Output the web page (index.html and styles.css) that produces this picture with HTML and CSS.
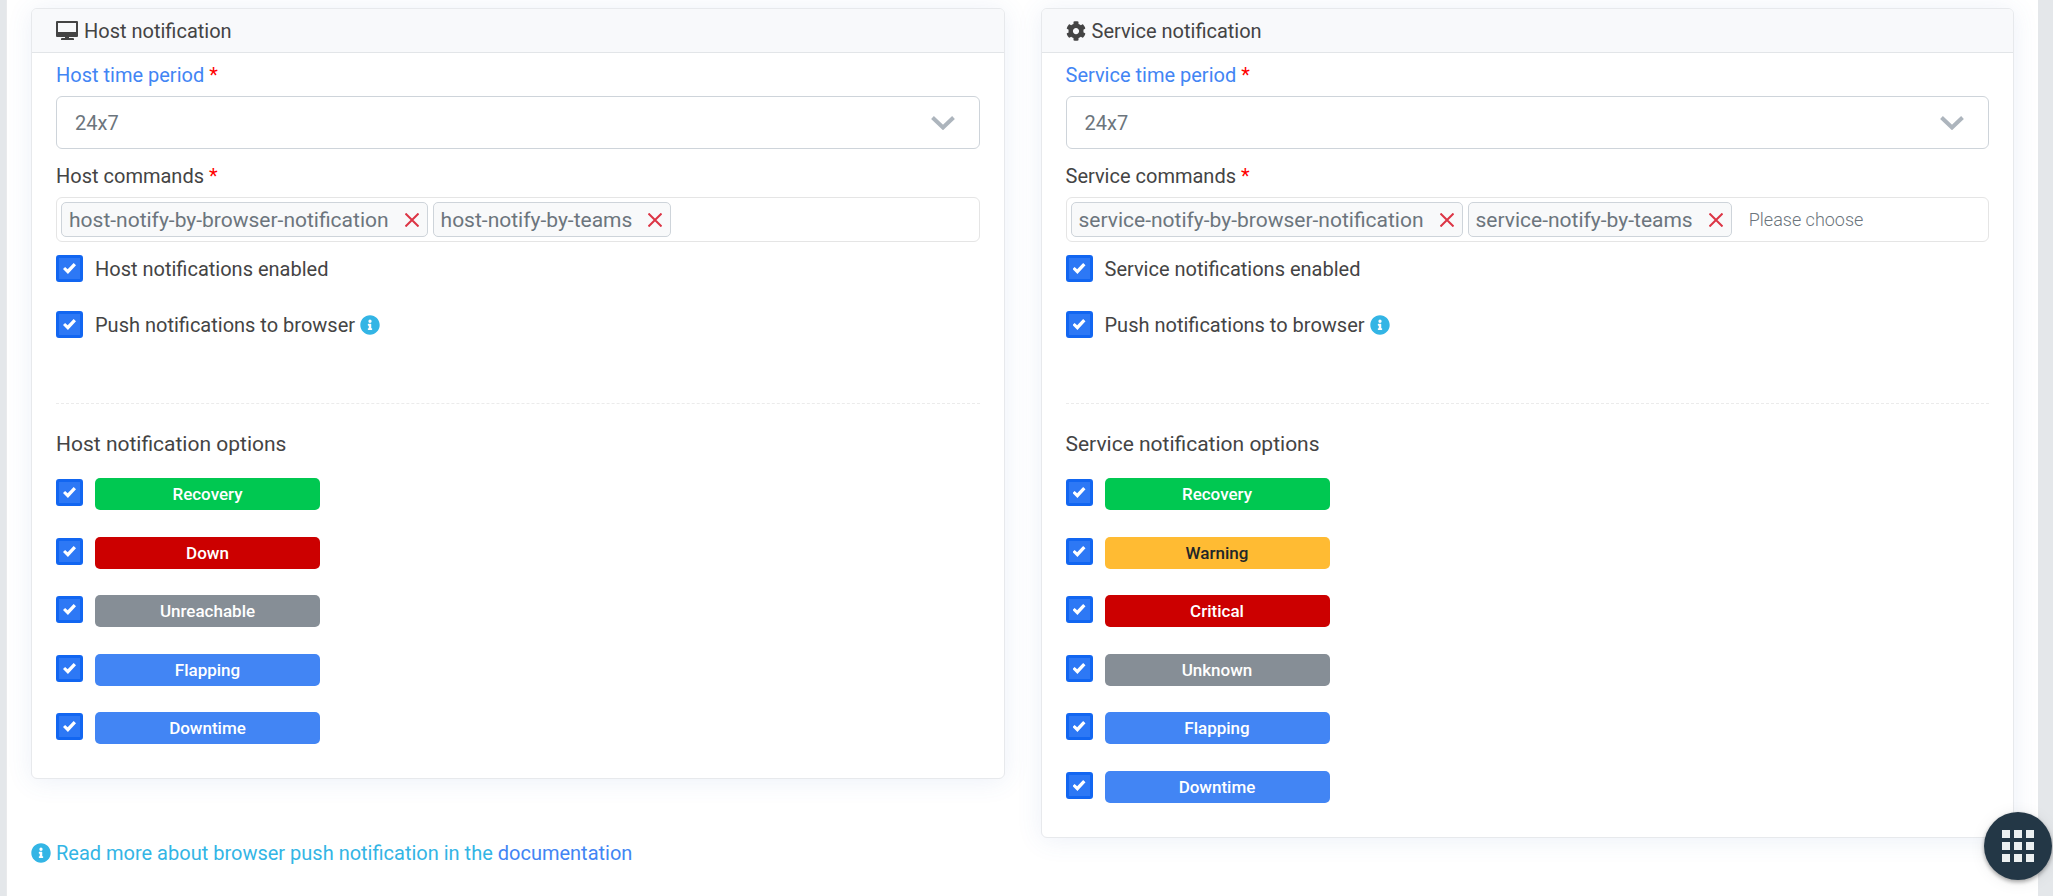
FILE: index.html
```html
<!DOCTYPE html>
<html lang="en">
<head>
<meta charset="utf-8">
<title>Notification settings</title>
<link rel="stylesheet" href="styles.css">
</head>
<body>
<svg class="sprite" aria-hidden="true">
  <symbol id="icon-info" viewBox="0 0 512 512"><path fill="currentColor" d="M256 8C119 8 8 119 8 256s111 248 248 248 248-111 248-248S393 8 256 8zm0 110a42 42 0 1 1 0 84 42 42 0 0 1 0-84zm56 254c0 7-5 12-12 12h-88c-7 0-12-5-12-12v-24c0-7 5-12 12-12h12v-64h-12c-7 0-12-5-12-12v-24c0-7 5-12 12-12h64c7 0 12 5 12 12v100h12c7 0 12 5 12 12v24z"/></symbol>
  <symbol id="icon-chevron" viewBox="0 0 24 14"><path fill="none" stroke="currentColor" stroke-width="4" d="M1.500 1.500 12 11.500 22.500 1.500"/></symbol>
  <symbol id="icon-close" viewBox="0 0 14 14"><path fill="none" stroke="currentColor" stroke-width="2" d="M0.500 0.500 13.500 13.500M13.500 0.500 0.500 13.500"/></symbol>
</svg>

<form class="page">
  <div class="columns">
    <section class="card">
      <h2 class="card-header">
        <svg class="icon-desktop" viewBox="0 0 22 20" aria-hidden="true"><path fill="currentColor" fill-rule="evenodd" d="M1 0h20a1 1 0 0 1 1 1v14a1 1 0 0 1-1 1h-8v1h4a1 1 0 0 1 1 1v1H5v-1a1 1 0 0 1 1-1h3v-1H1a1 1 0 0 1-1-1V1a1 1 0 0 1 1-1zM2 2v9h18V2z"/></svg>
        Host notification
      </h2>
      <div class="card-body">
        <label class="label" for="host-period"><a href="#host-period">Host time period</a> <span class="required">*</span></label>
        <div class="select">
          <select id="host-period"><option>24x7</option></select>
          <svg class="chevron" aria-hidden="true"><use href="#icon-chevron"/></svg>
        </div>
        <label class="label" for="host-commands">Host commands <span class="required">*</span></label>
        <div class="tags">
          <span class="tag">host-notify-by-browser-notification<button type="button" class="remove" aria-label="Remove"><svg aria-hidden="true"><use href="#icon-close"/></svg></button></span>
          <span class="tag">host-notify-by-teams<button type="button" class="remove" aria-label="Remove"><svg aria-hidden="true"><use href="#icon-close"/></svg></button></span>
          <input class="tag-input" id="host-commands" type="text">
        </div>
        <div class="checks">
          <label class="check"><input type="checkbox" checked>Host notifications enabled</label>
          <label class="check"><input type="checkbox" checked><span>Push notifications to browser <svg class="info" aria-hidden="true"><use href="#icon-info"/></svg></span></label>
        </div>
        <hr class="divider">
        <fieldset class="options">
          <legend>Host notification options</legend>
          <label class="option"><input type="checkbox" checked><span class="badge success">Recovery</span></label>
          <label class="option"><input type="checkbox" checked><span class="badge danger">Down</span></label>
          <label class="option"><input type="checkbox" checked><span class="badge secondary">Unreachable</span></label>
          <label class="option"><input type="checkbox" checked><span class="badge primary">Flapping</span></label>
          <label class="option"><input type="checkbox" checked><span class="badge primary">Downtime</span></label>
        </fieldset>
      </div>
    </section>

    <section class="card">
      <h2 class="card-header">
        <svg class="icon-cog" viewBox="0 0 512 512" aria-hidden="true"><path fill="currentColor" d="M487.400 315.700l-42.600-24.600c4.300-23.200 4.300-47 0-70.200l42.600-24.600c4.900-2.800 7.100-8.600 5.500-14-11.100-35.600-30-67.800-54.700-94.600-3.800-4.100-10-5.100-14.800-2.300L380.800 110c-17.900-15.400-38.500-27.300-60.800-35.100V25.800c0-5.600-3.900-10.500-9.400-11.700-36.700-8.200-74.300-7.800-109.200 0-5.500 1.200-9.400 6.100-9.400 11.700V75c-22.200 7.900-42.800 19.800-60.800 35.100L88.700 85.500c-4.900-2.800-11-1.900-14.800 2.300-24.700 26.700-43.600 58.900-54.700 94.600-1.700 5.400.6 11.200 5.500 14L67.300 221c-4.300 23.200-4.300 47 0 70.200l-42.600 24.600c-4.900 2.800-7.100 8.600-5.500 14 11.100 35.600 30 67.800 54.700 94.600 3.800 4.100 10 5.100 14.800 2.300l42.600-24.600c17.900 15.400 38.500 27.300 60.800 35.100v49.200c0 5.600 3.900 10.500 9.400 11.700 36.700 8.200 74.300 7.800 109.200 0 5.500-1.200 9.400-6.100 9.400-11.700v-49.200c22.200-7.900 42.800-19.800 60.800-35.100l42.600 24.600c4.900 2.800 11 1.900 14.800-2.300 24.700-26.700 43.600-58.900 54.700-94.600 1.500-5.500-.7-11.300-5.600-14.100zM256 336c-44.100 0-80-35.900-80-80s35.900-80 80-80 80 35.900 80 80-35.900 80-80 80z"/></svg>
        Service notification
      </h2>
      <div class="card-body">
        <label class="label" for="service-period"><a href="#service-period">Service time period</a> <span class="required">*</span></label>
        <div class="select">
          <select id="service-period"><option>24x7</option></select>
          <svg class="chevron" aria-hidden="true"><use href="#icon-chevron"/></svg>
        </div>
        <label class="label" for="service-commands">Service commands <span class="required">*</span></label>
        <div class="tags">
          <span class="tag">service-notify-by-browser-notification<button type="button" class="remove" aria-label="Remove"><svg aria-hidden="true"><use href="#icon-close"/></svg></button></span>
          <span class="tag">service-notify-by-teams<button type="button" class="remove" aria-label="Remove"><svg aria-hidden="true"><use href="#icon-close"/></svg></button></span>
          <input class="tag-input" id="service-commands" type="text" placeholder="Please choose">
        </div>
        <div class="checks">
          <label class="check"><input type="checkbox" checked>Service notifications enabled</label>
          <label class="check"><input type="checkbox" checked><span>Push notifications to browser <svg class="info" aria-hidden="true"><use href="#icon-info"/></svg></span></label>
        </div>
        <hr class="divider">
        <fieldset class="options">
          <legend>Service notification options</legend>
          <label class="option"><input type="checkbox" checked><span class="badge success">Recovery</span></label>
          <label class="option"><input type="checkbox" checked><span class="badge warning">Warning</span></label>
          <label class="option"><input type="checkbox" checked><span class="badge danger">Critical</span></label>
          <label class="option"><input type="checkbox" checked><span class="badge secondary">Unknown</span></label>
          <label class="option"><input type="checkbox" checked><span class="badge primary">Flapping</span></label>
          <label class="option"><input type="checkbox" checked><span class="badge primary">Downtime</span></label>
        </fieldset>
      </div>
    </section>
  </div>
  <p class="note"><svg class="info" aria-hidden="true"><use href="#icon-info"/></svg> Read more about browser push notification in the <a href="#documentation">documentation</a></p>
</form>

<button type="button" class="fab" aria-label="Menu">
  <svg viewBox="0 0 32 32" aria-hidden="true"><path fill="currentColor" d="M0 0h8v8H0zM12 0h8v8h-8zM24 0h8v8h-8zM0 12h8v8H0zM12 12h8v8h-8zM24 12h8v8h-8zM0 24h8v8H0zM12 24h8v8h-8zM24 24h8v8h-8z"/></svg>
</button>
</body>
</html>
```

FILE: styles.css
```css
* {
  box-sizing: border-box;
}

body {
  margin: 0;
  background: #e4e7ea;
  color: #444;
  font-family: Roboto, sans-serif;
  font-size: 20px;
  line-height: 30px;
}

a {
  color: #4285f4;
  text-decoration: none;
}

input,
select,
button {
  font: inherit;
}

.sprite {
  display: none;
}

.page {
  min-height: 100vh;
  margin: 0 15px 0 6px;
  padding: 8px 24px 0;
  border-left: 1px solid #e9eaec;
  background: #fff;
}

.columns {
  display: grid;
  grid-template-columns: repeat(2, minmax(0, 1fr));
  gap: 36px;
  align-items: start;
}

.card {
  border: 1px solid #e7e9ec;
  border-radius: 6px;
  background: #fff;
  box-shadow: 0 2px 26px rgba(70, 110, 190, 0.1);
}

.card-header {
  display: flex;
  align-items: center;
  gap: 6px;
  height: 44px;
  margin: 0;
  padding: 0 24px;
  border-bottom: 1px solid #e2e5e8;
  border-radius: 5px 5px 0 0;
  background: #f8f9fb;
  font-size: 20px;
  font-weight: 400;
}

.icon-desktop {
  width: 22px;
  height: 20px;
}

.icon-cog {
  width: 20px;
  height: 20px;
}

.card-body {
  padding: 7px 24px 34px;
}

.label {
  display: block;
  margin-bottom: 6px;
}

.required {
  color: #f00;
}

.select {
  position: relative;
  margin-bottom: 12px;
}

.select select {
  display: block;
  width: 100%;
  height: 53px;
  padding: 0 60px 0 18px;
  border: 1px solid #ced4da;
  border-radius: 6px;
  appearance: none;
  background: #fff;
  color: #6c757d;
}

.chevron {
  position: absolute;
  top: 20px;
  right: 25px;
  width: 24px;
  height: 14px;
  color: #adb5bd;
  pointer-events: none;
}

.tags {
  display: flex;
  gap: 5px;
  height: 45px;
  padding: 4px;
  border: 1px solid #e5e5e5;
  border-radius: 6px;
}

.tag {
  display: flex;
  align-items: center;
  height: 35px;
  padding: 0 8px 0 7px;
  border: 1px solid #ced4da;
  border-radius: 5px;
  background: #f8f9fa;
  color: #6c757d;
  font-size: 21px;
  white-space: nowrap;
}

.remove {
  display: flex;
  margin-left: 16px;
  padding: 0;
  border: 0;
  background: none;
  color: #dc3545;
}

.remove svg {
  width: 14px;
  height: 14px;
}

.tag-input {
  flex: 1;
  min-width: 0;
  padding: 0 12px;
  border: 0;
  outline: 0;
  background: none;
  font-size: 18px;
}

.tag-input::placeholder {
  color: #6c757d;
  font-weight: 300;
}

.checks {
  display: flex;
  flex-direction: column;
  align-items: flex-start;
  gap: 29px;
  margin: 13px 0 65px;
}

.check,
.option {
  display: flex;
  align-items: center;
  gap: 12px;
}

.check {
  height: 27px;
}

input[type="checkbox"] {
  display: grid;
  place-content: center;
  flex: none;
  width: 27px;
  height: 27px;
  margin: 0;
  border: 3px solid #1266f1;
  border-radius: 3px;
  appearance: none;
  background: #2d78f5;
}

input[type="checkbox"]:checked::before {
  content: "";
  width: 13px;
  height: 11px;
  background: #fff;
  clip-path: polygon(0 54%, 16% 36%, 36% 56%, 82% 0, 100% 20%, 38% 100%);
}

.info {
  width: 20px;
  height: 20px;
  color: #33b5e5;
  vertical-align: -3px;
}

.divider {
  margin: 0;
  border: 0;
  border-top: 1px dashed #ebebeb;
}

.options {
  margin: 25px 0 0;
  padding: 0;
  border: 0;
}

.options legend {
  margin-bottom: 19px;
  padding: 0;
  font-size: 21px;
}

.option {
  align-items: flex-start;
  width: fit-content;
  height: 32px;
  margin-bottom: 27px;
}

.option input[type="checkbox"] {
  margin-top: 1px;
}

.option:nth-of-type(even) {
  margin-bottom: 26px;
}

.option:last-child {
  margin-bottom: 0;
}

.badge {
  width: 225px;
  border-radius: 5px;
  color: #fff;
  font-size: 17px;
  font-weight: 500;
  line-height: 32px;
  text-align: center;
}

.success {
  background: #00c851;
}

.danger {
  background: #c00;
}

.secondary {
  background: #868e96;
}

.primary {
  background: #4285f4;
}

.warning {
  background: #fb3;
  color: #212529;
}

.note {
  margin: 0;
  color: #33b5e5;
}

.fab {
  position: fixed;
  right: 1px;
  bottom: 16px;
  display: grid;
  place-content: center;
  width: 68px;
  height: 68px;
  border: 0;
  border-radius: 50%;
  background: #233746;
  color: #ecf0f1;
  box-shadow: 0 2px 4px rgba(0, 0, 0, 0.35), 0 2px 16px rgba(0, 0, 0, 0.08);
}

.fab svg {
  width: 32px;
  height: 32px;
}
```
